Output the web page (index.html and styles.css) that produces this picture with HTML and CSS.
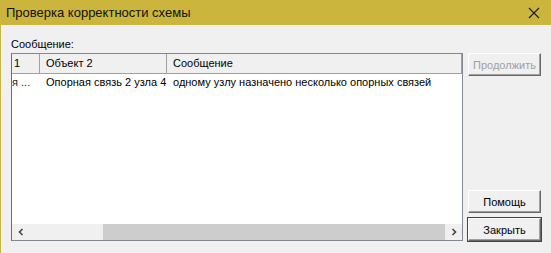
FILE: index.html
```html
<!DOCTYPE html>
<html lang="ru">
<head>
    <meta charset="UTF-8">
    <title>Проверка корректности схемы</title>
    <link rel="stylesheet" href="styles.css">
</head>
<body>
    <div class="window">
        <div class="titlebar">
            <span class="title">Проверка корректности схемы</span>
            <svg class="close" width="12" height="12" viewBox="0 0 12 12">
                <path d="M1 1 L11 11 M11 1 L1 11" stroke="#1a1a1a" stroke-width="1.1" fill="none"/>
            </svg>
        </div>

        <div class="content">
            <div class="main">
                <div class="label">Сообщение:</div>

                <!-- список сообщений -->
                <div class="listbox">
                    <div class="header">
                        <div class="col c1">1</div>
                        <div class="col c2">Объект 2</div>
                        <div class="col c3">Сообщение</div>
                    </div>
                    <div class="row">
                        <div class="cell c1">я ...</div>
                        <div class="cell c2">Опорная связь 2 узла 4</div>
                        <div class="cell c3">одному узлу назначено несколько опорных связей</div>
                    </div>
                    <div class="spacer"></div>
                    <div class="hscroll">
                        <div class="arrow">
                            <svg width="8" height="8" viewBox="0 0 8 8"><path d="M5.5 1 L2.5 4 L5.5 7" stroke="#444" stroke-width="1.6" fill="none"/></svg>
                        </div>
                        <div class="track">
                            <div class="thumb"></div>
                        </div>
                        <div class="arrow">
                            <svg width="8" height="8" viewBox="0 0 8 8"><path d="M2.5 1 L5.5 4 L2.5 7" stroke="#444" stroke-width="1.6" fill="none"/></svg>
                        </div>
                    </div>
                </div>
            </div>

            <div class="buttons">
                <button class="btn" disabled>Продолжить</button>
                <div class="grow"></div>
                <button class="btn">Помощь</button>
                <button class="btn default">Закрыть</button>
            </div>
        </div>
    </div>
</body>
</html>
```

FILE: styles.css
```css
body {
    margin: 0;
    font-family: Tahoma, "Liberation Sans", Arial, sans-serif;
    font-size: 11px;
    color: #000;
    background-color: #f0f0f0;
}
.window {
    width: 550px;
    height: 253px;
    border-left: 1px solid #cbb53c;
    background-color: #f0f0f0;
    display: flex;
    flex-direction: column;
}
.titlebar {
    height: 25px;
    margin-left: -1px;
    background-color: #cbb53c;
    display: flex;
    align-items: center;
    justify-content: space-between;
    padding: 0 11px 0 6px;
}
.title {
    font-family: "Liberation Sans", Arial, sans-serif;
    font-size: 13px;
    color: #111;
}
.close {
    margin-top: 1px;
}
.content {
    flex: 1;
    display: flex;
    padding: 13px 10px 12px 10px;
    gap: 5px;
}
.main {
    width: 452px;
    display: flex;
    flex-direction: column;
}
.label {
    height: 15px;
    line-height: 12px;
}
.listbox {
    flex: 1;
    background-color: #fff;
    border: 1px solid #828790;
    border-left-color: #6d6d6d;
    display: flex;
    flex-direction: column;
    overflow: hidden;
}
.header {
    display: flex;
    height: 19px;
    background-color: #f0f0f0;
    border-bottom: 1px solid #a0a0a0;
}
.col {
    line-height: 19px;
    padding-left: 6px;
    border-right: 1px solid #a0a0a0;
    white-space: nowrap;
    box-sizing: border-box;
}
.header .c1 {
    padding-left: 2px;
}
.row {
    display: flex;
    height: 17px;
    line-height: 17px;
}
.cell {
    padding-left: 6px;
    white-space: nowrap;
    overflow: hidden;
    box-sizing: border-box;
}
.row .c1 {
    padding-left: 0;
    color: #222;
}
.c1 {
    width: 28px;
}
.c2 {
    width: 127px;
}
.c3 {
    flex: 1;
}
.spacer {
    flex: 1;
}
.hscroll {
    height: 16px;
    display: flex;
    background-color: #f0f0f0;
}
.arrow {
    width: 17px;
    display: flex;
    align-items: center;
    justify-content: center;
}
.track {
    flex: 1;
    padding-left: 74px;
    display: flex;
}
.thumb {
    flex: 1;
    background-color: #cdcdcd;
}
.buttons {
    width: 73px;
    display: flex;
    flex-direction: column;
    gap: 5px;
    padding-top: 15px;
}
.grow {
    flex: 1;
}
.btn {
    height: 23px;
    font-family: Tahoma, "Liberation Sans", Arial, sans-serif;
    font-size: 11px;
    color: #000;
    background-color: #f0f0f0;
    border: 1px solid;
    border-color: #fff #696969 #696969 #fff;
    box-shadow: inset -1px -1px #a0a0a0;
    padding: 0;
}
.btn:disabled {
    color: #a0a0a0;
}
.btn.default {
    outline: 1px solid #444;
}
```
